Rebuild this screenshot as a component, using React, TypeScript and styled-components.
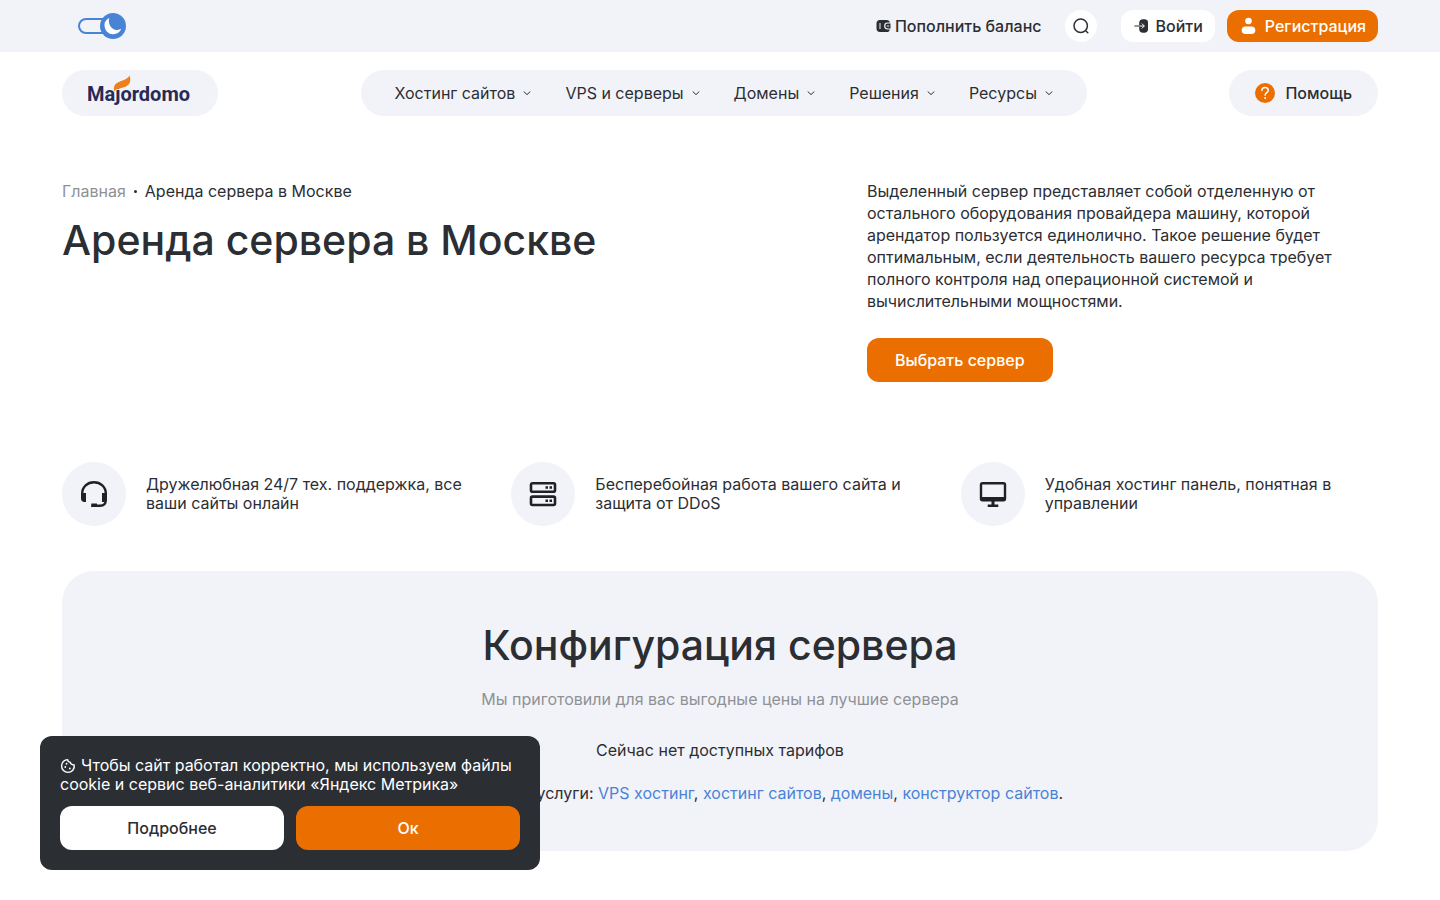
import React from "react";
import styled, { createGlobalStyle } from "styled-components";

const ink = "#2b2e33";
const mist = "#f2f3f9";
const orange = "#eb6f00";
const blue = "#4983d6";
const grey = "#8f9195";

const GlobalStyle = createGlobalStyle`
  *, *::before, *::after { box-sizing: border-box; }
  body {
    margin: 0;
    background: #fff;
    color: ${ink};
    font-family: Inter, "Noto Sans", sans-serif;
    font-size: 16px;
    line-height: 19px;
  }
  h1, h2, p, ul { margin: 0; padding: 0; }
  ul { list-style: none; }
  a { color: inherit; text-decoration: none; }
  button { border: 0; font: inherit; color: inherit; cursor: pointer; }
  svg { display: block; flex: none; }
`;

const Container = styled.div`
  padding: 0 62px;
`;

const TopBar = styled.div`
  display: flex;
  align-items: center;
  height: 52px;
  padding: 0 62px 0 78px;
  background: ${mist};
`;

const ThemeToggle = styled.label`
  display: flex;
  margin-right: auto;
  cursor: pointer;
  input {
    position: absolute;
    width: 48px;
    height: 26px;
    margin: 0;
    opacity: 0;
  }
`;

const BalanceLink = styled.a`
  display: flex;
  align-items: center;
  gap: 4px;
  margin-right: 24px;
  font-weight: 500;
`;

const SearchButton = styled.button`
  display: grid;
  place-items: center;
  width: 32px;
  height: 32px;
  margin-right: 24px;
  padding: 0;
  border-radius: 50%;
  background: #fff;
`;

const AccountLink = styled.a<{ $primary?: boolean }>`
  display: flex;
  align-items: center;
  gap: ${(p) => (p.$primary ? 8 : 6)}px;
  height: 32px;
  padding: 0 12px;
  border-radius: 12px;
  background: ${(p) => (p.$primary ? orange : "#fff")};
  color: ${(p) => (p.$primary ? "#fff" : ink)};
  font-weight: 500;
  & + & { margin-left: 12px; }
`;

const Header = styled.header`
  display: flex;
  align-items: center;
  justify-content: space-between;
  padding: 18px 62px 0;
`;

const Pill = styled.a`
  display: flex;
  align-items: center;
  gap: 10px;
  height: 46px;
  padding: 0 26px;
  border-radius: 23px;
  background: ${mist};
  font-weight: 500;
`;

const Nav = styled.nav`
  display: flex;
  align-items: center;
  gap: 34px;
  height: 46px;
  padding: 0 34px;
  border-radius: 23px;
  background: ${mist};
`;

const NavItem = styled.button`
  display: flex;
  align-items: center;
  gap: 8px;
  padding: 0;
  background: none;
`;

const Hero = styled.section`
  display: grid;
  grid-template-columns: 805fr 511fr;
  padding-top: 64px;
`;

const Breadcrumbs = styled.nav`
  display: flex;
  align-items: center;
  gap: 8px;
  height: 22px;
  a { color: ${grey}; }
`;

const Dot = styled.i`
  width: 3px;
  height: 3px;
  border-radius: 50%;
  background: ${ink};
`;

const Title = styled.h1`
  margin-top: 9px;
  font-size: 41px;
  font-weight: 500;
  line-height: 58px;
`;

const Lead = styled.p`
  line-height: 22px;
`;

const CtaButton = styled.button`
  height: 44px;
  margin-top: 26px;
  padding: 0 28px;
  border-radius: 12px;
  background: ${orange};
  color: #fff;
  font-weight: 500;
`;

const Features = styled.ul`
  display: grid;
  grid-template-columns: repeat(3, 1fr);
  gap: 32px;
  padding-top: 80px;
`;

const Feature = styled.li`
  display: flex;
  align-items: center;
  gap: 20px;
`;

const FeatureIcon = styled.span`
  display: grid;
  place-items: center;
  flex: none;
  width: 64px;
  height: 64px;
  border-radius: 50%;
  background: ${mist};
`;

const Panel = styled.section`
  margin: 45px 0 48px;
  padding: 45px 32px 48px;
  border-radius: 32px;
  background: ${mist};
  text-align: center;
`;

const PanelTitle = styled.h2`
  font-size: 41px;
  font-weight: 500;
  line-height: 58px;
`;

const PanelText = styled.p<{ $muted?: boolean; $gap: number }>`
  margin-top: ${(p) => p.$gap}px;
  color: ${(p) => (p.$muted ? grey : ink)};
  a { color: ${blue}; }
`;

const CookieBar = styled.aside`
  position: fixed;
  left: 40px;
  bottom: 30px;
  width: 500px;
  padding: 20px;
  border-radius: 12px;
  background: ${ink};
  color: #fff;
  svg {
    display: inline-block;
    margin-right: 5px;
    vertical-align: -3px;
  }
`;

const CookieActions = styled.div`
  display: grid;
  grid-template-columns: 1fr 1fr;
  gap: 12px;
  margin-top: 12px;
`;

const CookieButton = styled.button<{ $primary?: boolean }>`
  height: 44px;
  border-radius: 12px;
  background: ${(p) => (p.$primary ? orange : "#fff")};
  color: ${(p) => (p.$primary ? "#fff" : ink)};
  font-weight: 500;
`;

const MoonSwitch = () => (
  <svg width="48" height="26" viewBox="0 0 48 26" aria-hidden="true">
    <rect x="1" y="6" width="40" height="14" rx="7" fill={mist} stroke={blue} strokeWidth="2" />
    <circle cx="35" cy="13" r="13" fill={blue} />
    <path d="M31.400 5C27.800 6.500 26 9.800 26.600 13.600C27.200 18.200 31 21.500 35.300 21.300C39 21.100 42 19 43.300 15.800C40.500 17.600 36.700 17.200 34 14.900C31.200 12.400 30.200 8.300 31.400 5Z" fill="#fff" />
  </svg>
);

const WalletIcon = () => (
  <svg width="15" height="14" viewBox="0 0 15 14" aria-hidden="true">
    <path d="M4 1H10.500C12.500 1 13.600 1.900 13.900 3.600H11.500A3.400 3.400 0 0 0 11.500 10.400H13.900C13.600 12.100 12.500 13 10.500 13H4C1.600 13 .5 11.800 .5 9.500V4.500C.5 2.200 1.600 1 4 1Z" fill={ink} />
    <path d="M4 4V10" stroke={mist} strokeWidth="1" />
    <path d="M11.700 4.600H14.500V9.400H11.700A2.400 2.400 0 0 1 11.700 4.600Z" fill={ink} />
    <path d="M11.300 7H12.800" stroke={mist} strokeWidth="1.200" strokeLinecap="round" />
  </svg>
);

const SearchIcon = () => (
  <svg width="16" height="16" viewBox="0 0 16 16" fill="none" stroke={ink} strokeWidth="1.500" strokeLinecap="round" aria-hidden="true">
    <circle cx="7.700" cy="7.700" r="6.700" />
    <path d="M12.700 12.700L14.800 14.800" />
  </svg>
);

const LoginIcon = () => (
  <svg width="16" height="16" viewBox="0 0 16 16" fill="none" aria-hidden="true">
    <path d="M10 1.300H11.300C13.700 1.300 15 2.500 15 4.500V11.500C15 13.500 13.700 14.700 11.300 14.700H10C7.500 14.700 6.300 13.500 6.200 11V5C6.300 2.500 7.500 1.300 10 1.300Z" fill={ink} />
    <path d="M6.200 8H11.300M8.800 5.500L11.300 8L8.800 10.500" stroke="#fff" strokeWidth="1" />
    <path d="M1.800 8H6.200" stroke={ink} strokeWidth="1" strokeLinecap="round" />
  </svg>
);

const UserIcon = () => (
  <svg width="18" height="18" viewBox="0 0 18 18" fill="#fff" aria-hidden="true">
    <circle cx="9.500" cy="4" r="3.300" />
    <rect x="2.700" y="9.500" width="13.600" height="7.600" rx="3.800" />
  </svg>
);

const Logo = () => (
  <svg width="104" height="36" viewBox="0 0 104 36" role="img" aria-label="Majordomo">
    <text x="-1" y="26" fontFamily="Roboto, sans-serif" fontSize="20" fontWeight="700" fill="#282a56">
      Majordomo
    </text>
    <path d="M26 16.500C25.300 10.500 27.500 8.300 32 6.600C37 4.700 40.500 3.300 41.500 .3C43.300 6 42.300 9.500 37.500 11.700C33 13.500 28.500 13 26 16.500Z" fill="#ef7f1a" />
  </svg>
);

const Chevron = () => (
  <svg width="8" height="8" viewBox="0 0 8 8" fill="none" stroke={ink} strokeLinecap="round" strokeLinejoin="round" aria-hidden="true">
    <path d="M1 2.800L4 5.600L7 2.800" />
  </svg>
);

const HelpIcon = () => (
  <svg width="20" height="20" viewBox="0 0 20 20" fill="none" aria-hidden="true">
    <circle cx="10" cy="10" r="10" fill={orange} />
    <path d="M6.900 7.500C6.900 5.700 8.200 4.500 10.100 4.500C12 4.500 13.300 5.600 13.300 7.300C13.300 9.600 10.100 9.600 10.100 12.200" stroke="#fff" strokeWidth="1.400" strokeLinecap="round" />
    <circle cx="10.100" cy="14.900" r="1" fill="#fff" />
  </svg>
);

const HeadsetIcon = () => (
  <svg width="32" height="32" viewBox="0 0 32 32" fill="none" aria-hidden="true">
    <path d="M4.200 19V15.500C4.200 8.800 9.500 4.200 16 4.200C22.500 4.200 27.800 8.800 27.800 15.500V22C27.800 25.800 25.800 27.700 22 27.700H13.500" stroke="#1f2125" strokeWidth="2.400" />
    <path d="M3 15H8V24H6.500C4.300 24 3 22.500 3 20.500ZM24 15H29V20.500C29 22.500 27.700 24 25.500 24H24Z" fill="#1f2125" />
    <path d="M13.300 25.500H19V29H13.300Z" fill="#1f2125" />
  </svg>
);

const ServersIcon = () => (
  <svg width="32" height="32" viewBox="0 0 32 32" fill="none" stroke="#1f2125" strokeWidth="2.600" aria-hidden="true">
    <rect x="4" y="5.300" width="24" height="8.400" rx="1.500" />
    <rect x="4" y="18.600" width="24" height="8.400" rx="1.500" />
    <path d="M18.500 9.500H21M22.500 9.500H25M18.500 22.800H21M22.500 22.800H25" />
  </svg>
);

const MonitorIcon = () => (
  <svg width="32" height="32" viewBox="0 0 32 32" fill="none" aria-hidden="true">
    <rect x="4" y="5.300" width="24" height="17" rx="1.500" stroke="#1f2125" strokeWidth="2.400" />
    <path d="M4 19H28V22.500H4ZM14.500 23H17.500V27H14.500ZM10.700 26.500H21.300V29H10.700Z" fill="#1f2125" />
  </svg>
);

const CookieIcon = () => (
  <svg width="16" height="16" viewBox="0 0 16 16" fill="none" stroke="#fff" strokeWidth="1.400" strokeLinecap="round" strokeLinejoin="round" aria-hidden="true">
    <path d="M7.700 1.600C7.700 3.300 8.700 4.200 10.200 4.100C10.300 5.700 12 6.700 14.200 7C14.900 11 11.900 14.400 8 14.400C4.400 14.400 1.600 11.600 1.600 8C1.600 4.500 4.200 1.700 7.700 1.600Z" />
    <path d="M6.600 5.700V5.800M5.300 9V9.100M9.800 10.300V10.400" strokeWidth="1.800" />
  </svg>
);

const sections = ["Хостинг сайтов", "VPS и серверы", "Домены", "Решения", "Ресурсы"];

const benefits = [
  { icon: <HeadsetIcon />, lines: ["Дружелюбная 24/7 тех. поддержка, все", "ваши сайты онлайн"] },
  { icon: <ServersIcon />, lines: ["Бесперебойная работа вашего сайта и", "защита от DDoS"] },
  { icon: <MonitorIcon />, lines: ["Удобная хостинг панель, понятная в", "управлении"] },
];

export default function App() {
  return (
    <>
      <GlobalStyle />
      <TopBar>
        <ThemeToggle>
          <input type="checkbox" role="switch" aria-label="Тёмная тема" />
          <MoonSwitch />
        </ThemeToggle>
        <BalanceLink href="#balance">
          <WalletIcon />
          Пополнить баланс
        </BalanceLink>
        <SearchButton type="button" aria-label="Поиск">
          <SearchIcon />
        </SearchButton>
        <AccountLink href="#login">
          <LoginIcon />
          Войти
        </AccountLink>
        <AccountLink href="#register" $primary>
          <UserIcon />
          Регистрация
        </AccountLink>
      </TopBar>
      <Header>
        <Pill href="#home">
          <Logo />
        </Pill>
        <Nav>
          {sections.map((name) => (
            <NavItem type="button" key={name}>
              {name}
              <Chevron />
            </NavItem>
          ))}
        </Nav>
        <Pill href="#help">
          <HelpIcon />
          Помощь
        </Pill>
      </Header>
      <Container as="main">
        <Hero>
          <div>
            <Breadcrumbs>
              <a href="#home">Главная</a>
              <Dot />
              <span>Аренда сервера в Москве</span>
            </Breadcrumbs>
            <Title>Аренда сервера в Москве</Title>
          </div>
          <div>
            <Lead>
              Выделенный сервер представляет собой отделенную от
              <br />
              остального оборудования провайдера машину, которой
              <br />
              арендатор пользуется единолично. Такое решение будет
              <br />
              оптимальным, если деятельность вашего ресурса требует
              <br />
              полного контроля над операционной системой и
              <br />
              вычислительными мощностями.
            </Lead>
            <CtaButton type="button">Выбрать сервер</CtaButton>
          </div>
        </Hero>
        <Features>
          {benefits.map(({ icon, lines }) => (
            <Feature key={lines[0]}>
              <FeatureIcon>{icon}</FeatureIcon>
              <p>
                {lines[0]}
                <br />
                {lines[1]}
              </p>
            </Feature>
          ))}
        </Features>
        <Panel>
          <PanelTitle>Конфигурация сервера</PanelTitle>
          <PanelText $muted $gap={16}>
            Мы приготовили для вас выгодные цены на лучшие сервера
          </PanelText>
          <PanelText $gap={32}>Сейчас нет доступных тарифов</PanelText>
          <PanelText $gap={24}>
            Посмотрите другие услуги: <a href="#vps">VPS хостинг</a>, <a href="#hosting">хостинг сайтов</a>,{" "}
            <a href="#domains">домены</a>, <a href="#builder">конструктор сайтов</a>.
          </PanelText>
        </Panel>
      </Container>
      <CookieBar>
        <p>
          <CookieIcon />
          Чтобы сайт работал корректно, мы используем файлы
          <br />
          cookie и сервис веб-аналитики «Яндекс Метрика»
        </p>
        <CookieActions>
          <CookieButton type="button">Подробнее</CookieButton>
          <CookieButton type="button" $primary>
            Ок
          </CookieButton>
        </CookieActions>
      </CookieBar>
    </>
  );
}
